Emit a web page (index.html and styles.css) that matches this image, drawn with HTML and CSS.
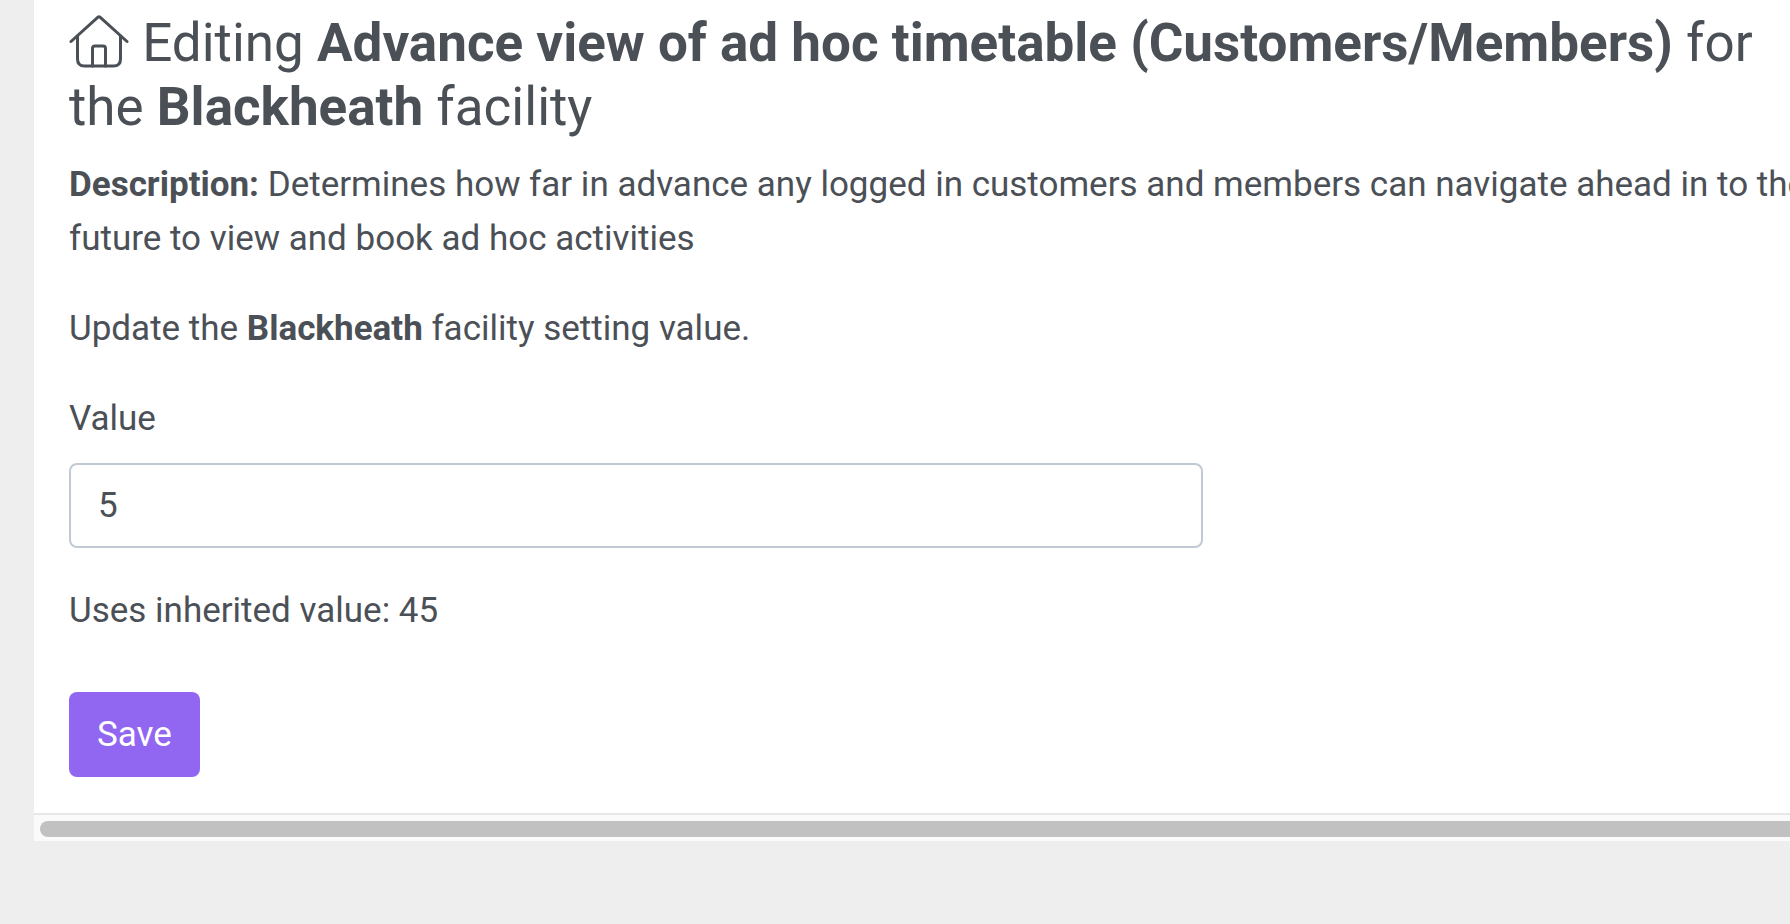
FILE: index.html
```html
<!DOCTYPE html>
<html lang="en">
<head>
    <meta charset="UTF-8">
    <meta name="viewport" content="width=device-width, initial-scale=1.0">
    <title>Edit Setting</title>
    <link rel="stylesheet" href="styles.css">
</head>
<body>
    <main class="page">
        <div class="panel">
            <!-- Heading -->
            <h1 class="title">
                <svg class="home-icon" viewBox="0 0 60 54" aria-hidden="true">
                    <path d="M2 27.5 29 3.2Q30 2.3 31 3.2L58 27.5"/>
                    <path d="M8.5 22V45Q8.5 52 15.5 52H44.5Q51.5 52 51.5 45V22"/>
                    <path d="M23.5 52V34.5Q23.5 32 26 32H34Q36.5 32 36.5 34.5V52"/>
                </svg>
                Editing <strong>Advance view of ad hoc timetable (Customers/Members)</strong> for the <strong>Blackheath</strong> facility
            </h1>

            <p><strong>Description:</strong> Determines how far in advance any logged in customers and members can navigate ahead in to the future to view and book ad hoc activities</p>
            <p>Update the <strong>Blackheath</strong> facility setting value.</p>

            <!-- Setting Form -->
            <form>
                <label for="value">Value</label>
                <input type="text" id="value" class="value-input" value="5">
                <p>Uses inherited value: 45</p>
                <button type="submit" class="save">Save</button>
            </form>
        </div>

        <!-- Horizontal Scrollbar -->
        <div class="scroll-track">
            <div class="scroll-thumb"></div>
        </div>
    </main>
</body>
</html>
```

FILE: styles.css
```css
* {
    box-sizing: border-box;
}

/* Body Styling */
body {
    margin: 0;
    font-family: Roboto, sans-serif;
    font-size: 35px;
    line-height: 54px;
    color: #4b5057;
    background: #eeeeee;
}

.page {
    margin-left: 34px;
    overflow: hidden;
}

.panel {
    margin-right: -59px;
    padding: 11px 35px 36px;
    background: #ffffff;
    border-bottom: 2px solid #e7e7e7;
}

/* Heading */
.title {
    margin: 0 0 19px;
    font-size: 53px;
    font-weight: 400;
    line-height: 64px;
}

.home-icon {
    width: 60px;
    height: 54px;
    vertical-align: -7px;
    fill: none;
    stroke: #4b5057;
    stroke-width: 3;
    stroke-linecap: round;
    stroke-linejoin: round;
}

strong {
    font-weight: 700;
}

p {
    margin: 0 0 36px;
}

/* Setting Form */
label {
    display: block;
    margin-bottom: 17px;
}

.value-input {
    display: block;
    width: 65%;
    margin-bottom: 36px;
    padding: 14px 27px 13px;
    font: inherit;
    color: inherit;
    background: #ffffff;
    border: 2px solid #c1cad3;
    border-radius: 8px;
}

.save {
    display: block;
    margin-top: 54px;
    padding: 16px 28px 15px;
    font: inherit;
    color: #ffffff;
    background: #9167f1;
    border: none;
    border-radius: 8px;
    cursor: pointer;
}

/* Scrollbar */
.scroll-track {
    padding: 6px 0 4px 6px;
    background: #fafafa;
}

.scroll-thumb {
    height: 16px;
    background: #c1c1c1;
    border-radius: 8px 0 0 8px;
}
```
